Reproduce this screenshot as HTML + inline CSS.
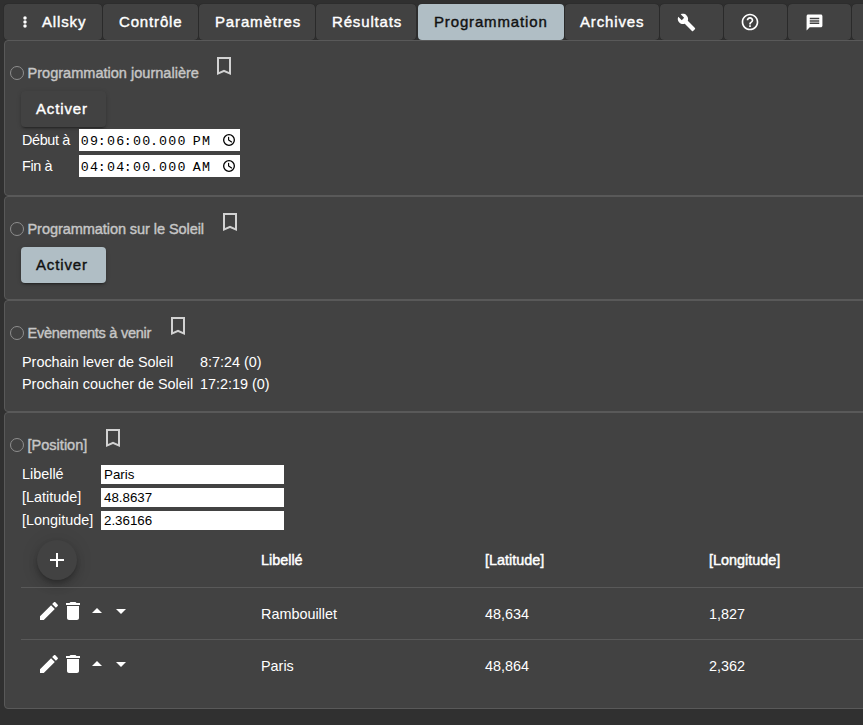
<!DOCTYPE html>
<html><head><meta charset="utf-8">
<style>
html,body{margin:0;padding:0;}
body{width:863px;height:725px;overflow:hidden;background:#303030;position:relative;font-family:"Liberation Sans",sans-serif;color:#fff;}
.a{position:absolute;white-space:nowrap;}
.tab{position:absolute;top:4px;height:36px;background:#424242;border-radius:4px;box-shadow:0 0 1px 0 rgba(0,0,0,0.6);}
.tab.on{background:#b0bec5;}
.tt{position:absolute;font-size:15px;font-weight:normal;letter-spacing:0.85px;-webkit-text-stroke:0.4px currentColor;line-height:15px;top:10px;color:#fff;white-space:nowrap;}
.panel{position:absolute;left:4px;width:900px;background:#424242;border:1px solid #595959;border-radius:4px;box-sizing:border-box;}
.radio{position:absolute;left:5px;width:14px;height:14px;border-radius:50%;border:1px solid #8e8e8e;box-sizing:border-box;}
.h{position:absolute;left:22.5px;font-size:14.55px;line-height:15px;color:#c6c6c6;-webkit-text-stroke:0.4px #c6c6c6;white-space:nowrap;}
.bm{position:absolute;width:24px;height:24px;}
.btn{position:absolute;left:16px;width:85px;height:36px;border-radius:4px;background:#424242;box-shadow:0 3px 1px -2px rgba(0,0,0,0.2),0 2px 2px 0 rgba(0,0,0,0.14),0 1px 5px 0 rgba(0,0,0,0.12);}
.btn span{position:absolute;left:15px;top:10px;font-size:15px;line-height:15px;letter-spacing:0.85px;-webkit-text-stroke:0.4px currentColor;color:#fff;}
.btn.on{background:#b0bec5;}
.btn.on span{color:#111;}
.lbl{position:absolute;margin-top:-1px;font-size:14.4px;line-height:15px;color:#fff;white-space:nowrap;}
.tin{position:absolute;left:74px;width:161px;height:22px;background:#fff;}
.tin i{position:absolute;font-style:normal;top:5.5px;font-family:"Liberation Mono",monospace;font-size:13.33px;line-height:14px;color:#000;white-space:pre;}
.tin svg{position:absolute;left:142.8px;top:3.8px;}
.txt{position:absolute;left:96px;width:183px;height:19px;background:#fff;}
.txt span{position:absolute;left:3px;top:2px;font-size:13.33px;line-height:15px;color:#000;}
.div{position:absolute;left:16px;width:900px;height:1px;background:#595959;}
.th{position:absolute;font-size:14.4px;line-height:15px;-webkit-text-stroke:0.45px #fff;letter-spacing:0px;color:#fff;white-space:nowrap;margin-top:-1.5px;}
.td{position:absolute;font-size:14.4px;line-height:15px;color:#fff;white-space:nowrap;margin-top:-1px;}
.ic{position:absolute;width:24px;height:24px;fill:#fff;}
</style></head><body>

<!-- Tabs -->
<div class="tab" style="left:4px;width:98px;">
  <svg class="a" style="left:15px;top:10px" width="12" height="16" viewBox="0 0 12 16" fill="#fff"><circle cx="6" cy="3.9" r="1.75"/><circle cx="6" cy="8" r="1.75"/><circle cx="6" cy="12.1" r="1.75"/></svg>
  <span class="tt" style="left:38px">Allsky</span>
</div>
<div class="tab" style="left:103px;width:95px;"><span class="tt" style="left:16px">Contrôle</span></div>
<div class="tab" style="left:199px;width:116px;"><span class="tt" style="left:16px">Paramètres</span></div>
<div class="tab" style="left:316px;width:100px;"><span class="tt" style="left:16px">Résultats</span></div>
<div class="tab on" style="left:418px;width:146px;"><span class="tt" style="left:16px;color:#111">Programmation</span></div>
<div class="tab" style="left:565px;width:94px;"><span class="tt" style="left:15px">Archives</span></div>
<div class="tab" style="left:660px;width:63px;">
  <svg class="a" style="left:16.8px;top:8.6px" width="19" height="19" viewBox="0 0 24 24" fill="#fff"><path d="M22.7 19l-9.1-9.1c.9-2.3.4-5-1.5-6.9-2-2-5-2.4-7.4-1.3L9 6 6 9 1.6 4.7C.4 7.1.9 10.1 2.9 12.1c1.9 1.9 4.6 2.4 6.9 1.5l9.1 9.1c.4.4 1 .4 1.4 0l2.3-2.3c.5-.4.5-1.1.1-1.4z"/></svg>
</div>
<div class="tab" style="left:724px;width:63px;">
  <svg class="a" style="left:16px;top:8px" width="20" height="20" viewBox="0 0 24 24" fill="#fff"><path d="M11 18h2v-2h-2v2zm1-16C6.48 2 2 6.48 2 12s4.48 10 10 10 10-4.48 10-10S17.52 2 12 2zm0 18c-4.41 0-8-3.59-8-8s3.59-8 8-8 8 3.59 8 8-3.59 8-8 8zm0-14c-2.21 0-4 1.79-4 4h2c0-1.1.9-2 2-2s2 .9 2 2c0 2-3 1.75-3 5h2c0-2.25 3-2.5 3-5 0-2.21-1.79-4-4-4z"/></svg>
</div>
<div class="tab" style="left:788px;width:63px;">
  <svg class="a" style="left:17px;top:8.6px" width="19" height="19" viewBox="0 0 24 24" fill="#fff"><path d="M20 2H4c-1.1 0-1.99.9-1.99 2L2 22l4-4h14c1.1 0 2-.9 2-2V4c0-1.1-.9-2-2-2zM18 14H6v-2h12v2zm0-3H6V9h12v2zm0-3H6V6h12v2z"/></svg>
</div>
<div class="tab" style="left:852px;width:63px;"></div>

<!-- Panel 1 -->
<div class="panel" style="top:40px;height:156px;">
  <div class="radio" style="top:25px"></div>
  <span class="h" style="top:25px">Programmation journalière</span>
  <svg class="bm" style="left:207px;top:13px" viewBox="0 0 24 24" fill="#d2d2d2"><path d="M19 3H5v18l7-3 7 3V3zm-2 15l-5-2.18L7 18V5h10v13z"/></svg>
  <div class="btn" style="top:50px"><span>Activer</span></div>
  <span class="lbl" style="left:17px;top:93px;letter-spacing:-0.35px">Début à</span>
  <div class="tin" style="top:88px"><i style="left:1.8px;letter-spacing:1.2px;">09</i><i style="left:18.7px;">:</i><i style="left:28.0px;letter-spacing:1.2px;">06</i><i style="left:44.8px;">:</i><i style="left:54.1px;letter-spacing:1.2px;">00</i><i style="left:71.0px;">.</i><i style="left:80.0px;letter-spacing:1.2px;">000</i><i style="left:113.8px;letter-spacing:1.2px;">PM</i><svg width="14" height="14" viewBox="0 0 14 14" fill="none" stroke="#000"><circle cx="7" cy="7" r="5.35" stroke-width="1.3"/><path d="M6.6 4.3V7.1L9.6 8.9" stroke-width="1.15" stroke-linecap="round" stroke-linejoin="round"/></svg></div>
  <span class="lbl" style="left:17px;top:119px;letter-spacing:-0.35px">Fin à</span>
  <div class="tin" style="top:114px"><i style="left:1.8px;letter-spacing:1.2px;">04</i><i style="left:18.7px;">:</i><i style="left:28.0px;letter-spacing:1.2px;">04</i><i style="left:44.8px;">:</i><i style="left:54.1px;letter-spacing:1.2px;">00</i><i style="left:71.0px;">.</i><i style="left:80.0px;letter-spacing:1.2px;">000</i><i style="left:113.8px;letter-spacing:1.2px;">AM</i><svg width="14" height="14" viewBox="0 0 14 14" fill="none" stroke="#000"><circle cx="7" cy="7" r="5.35" stroke-width="1.3"/><path d="M6.6 4.3V7.1L9.6 8.9" stroke-width="1.15" stroke-linecap="round" stroke-linejoin="round"/></svg></div>
</div>

<!-- Panel 2 -->
<div class="panel" style="top:196px;height:104px;">
  <div class="radio" style="top:25px"></div>
  <span class="h" style="top:25px;letter-spacing:-0.08px">Programmation sur le Soleil</span>
  <svg class="bm" style="left:213px;top:13px" viewBox="0 0 24 24" fill="#d2d2d2"><path d="M19 3H5v18l7-3 7 3V3zm-2 15l-5-2.18L7 18V5h10v13z"/></svg>
  <div class="btn on" style="top:50px"><span>Activer</span></div>
</div>

<!-- Panel 3 -->
<div class="panel" style="top:300px;height:112px;">
  <div class="radio" style="top:25px"></div>
  <span class="h" style="top:25px;letter-spacing:-0.28px">Evènements à venir</span>
  <svg class="bm" style="left:161px;top:13px" viewBox="0 0 24 24" fill="#d2d2d2"><path d="M19 3H5v18l7-3 7 3V3zm-2 15l-5-2.18L7 18V5h10v13z"/></svg>
  <span class="lbl" style="left:17px;top:55px">Prochain lever de Soleil</span>
  <span class="lbl" style="left:195px;top:55px">8:7:24 (0)</span>
  <span class="lbl" style="left:17px;top:77px">Prochain coucher de Soleil</span>
  <span class="lbl" style="left:195px;top:77px">17:2:19 (0)</span>
</div>

<!-- Panel 4 -->
<div class="panel" style="top:412px;height:297px;">
  <div class="radio" style="top:25px"></div>
  <span class="h" style="top:25px">[Position]</span>
  <svg class="bm" style="left:96px;top:13px" viewBox="0 0 24 24" fill="#d2d2d2"><path d="M19 3H5v18l7-3 7 3V3zm-2 15l-5-2.18L7 18V5h10v13z"/></svg>
  <span class="lbl" style="left:17px;top:55px">Libellé</span>
  <div class="txt" style="top:52px"><span>Paris</span></div>
  <span class="lbl" style="left:17px;top:78px">[Latitude]</span>
  <div class="txt" style="top:75px"><span>48.8637</span></div>
  <span class="lbl" style="left:17px;top:101px">[Longitude]</span>
  <div class="txt" style="top:98px"><span>2.36166</span></div>

  <div class="a" style="left:32px;top:127px;width:40px;height:40px;border-radius:50%;background:#424242;box-shadow:0 3px 5px -1px rgba(0,0,0,0.2),0 6px 10px 0 rgba(0,0,0,0.14),0 1px 18px 0 rgba(0,0,0,0.12);">
    <svg class="a" style="left:8px;top:8px" width="24" height="24" viewBox="0 0 24 24" fill="#fff"><path d="M19 13h-6v6h-2v-6H5v-2h6V5h2v6h6v2z"/></svg>
  </div>
  <span class="th" style="left:256px;top:141px">Libellé</span>
  <span class="th" style="left:480px;top:141px">[Latitude]</span>
  <span class="th" style="left:704px;top:141px">[Longitude]</span>
  <div class="div" style="top:174px"></div>

  <svg class="ic" style="left:31.5px;top:186px" viewBox="0 0 24 24"><path d="M3 17.25V21h3.75L17.81 9.94l-3.75-3.75L3 17.25zM20.71 7.04c.39-.39.39-1.02 0-1.41l-2.34-2.34c-.39-.39-1.02-.39-1.41 0l-1.83 1.83 3.75 3.75 1.83-1.83z"/></svg>
  <svg class="ic" style="left:55.5px;top:186px" viewBox="0 0 24 24"><path d="M6 19c0 1.1.9 2 2 2h8c1.1 0 2-.9 2-2V7H6v12zM19 4h-3.5l-1-1h-5l-1 1H5v2h14V4z"/></svg>
  <svg class="ic" style="left:79.5px;top:186px" viewBox="0 0 24 24"><path d="M7 14l5-5 5 5z"/></svg>
  <svg class="ic" style="left:103.5px;top:186px" viewBox="0 0 24 24"><path d="M7 10l5 5 5-5z"/></svg>
  <span class="td" style="left:256px;top:195px">Rambouillet</span>
  <span class="td" style="left:480px;top:195px">48,634</span>
  <span class="td" style="left:704px;top:195px">1,827</span>
  <div class="div" style="top:226px"></div>

  <svg class="ic" style="left:31.5px;top:239px" viewBox="0 0 24 24"><path d="M3 17.25V21h3.75L17.81 9.94l-3.75-3.75L3 17.25zM20.71 7.04c.39-.39.39-1.02 0-1.41l-2.34-2.34c-.39-.39-1.02-.39-1.41 0l-1.83 1.83 3.75 3.75 1.83-1.83z"/></svg>
  <svg class="ic" style="left:55.5px;top:239px" viewBox="0 0 24 24"><path d="M6 19c0 1.1.9 2 2 2h8c1.1 0 2-.9 2-2V7H6v12zM19 4h-3.5l-1-1h-5l-1 1H5v2h14V4z"/></svg>
  <svg class="ic" style="left:79.5px;top:239px" viewBox="0 0 24 24"><path d="M7 14l5-5 5 5z"/></svg>
  <svg class="ic" style="left:103.5px;top:239px" viewBox="0 0 24 24"><path d="M7 10l5 5 5-5z"/></svg>
  <span class="td" style="left:256px;top:247px">Paris</span>
  <span class="td" style="left:480px;top:247px">48,864</span>
  <span class="td" style="left:704px;top:247px">2,362</span>
</div>

</body></html>
